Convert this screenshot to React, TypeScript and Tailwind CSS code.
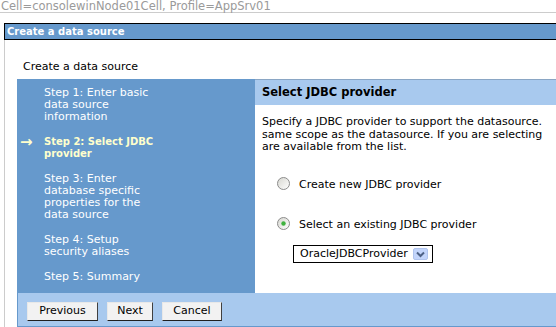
import React from 'react';

const steps = [
    { lines: ['Step 1: Enter basic', 'data source', 'information'] },
    { lines: ['Step 2: Select JDBC', 'provider'], current: true },
    { lines: ['Step 3: Enter', 'database specific', 'properties for the', 'data source'] },
    { lines: ['Step 4: Setup', 'security aliases'] },
    { lines: ['Step 5: Summary'] },
];

function Radio({ checked }: { checked?: boolean }) {
    const id = checked ? 'rg1' : 'rg0';
    return (
        <svg width="13" height="13" viewBox="0 0 13 13" className="shrink-0">
            <defs>
                <linearGradient id={id} x1="0" y1="0" x2="1" y2="1">
                    <stop offset="0" stopColor="#d6d6d0" />
                    <stop offset="1" stopColor="#ffffff" />
                </linearGradient>
            </defs>
            <circle cx="6.5" cy="6.5" r="6" fill={`url(#${id})`} stroke="#8c8c8c" />
            {checked && <circle cx="6.5" cy="6.5" r="2.2" fill="#3fb23f" />}
        </svg>
    );
}

function Btn({ label, w }: { label: string; w: string }) {
    return (
        <button
            className={`${w} h-[19px] bg-[#f2f2f2] border border-t-[#e8e8e8] border-l-[#e8e8e8] border-r-[#404040] border-b-[#202020] text-[11px] leading-[16px] text-black text-center`}
        >
            {label}
        </button>
    );
}

export default function App() {
    return (
        <div className="w-[556px] h-[327px] overflow-hidden bg-white font-['DejaVu_Sans',Verdana,sans-serif] text-[11px] text-black">
            {/* scope line */}
            <div className="h-[13px] border-b border-[#cccccc] pl-px text-[11.5px] leading-[12px] text-[#9a9a9a] whitespace-nowrap">
                Cell=consolewinNode01Cell, Profile=AppSrv01
            </div>

            <div className="mt-[10px] ml-[4px]">
                {/* page title bar */}
                <div className="h-[17px] border-y border-l border-black bg-[#6699cc] pl-[2px] text-[10px] text-white font-bold leading-[15px] whitespace-nowrap">
                    Create a data source
                </div>

                <div className="border-l border-[#cccccc] pl-[12px] pt-[20px]">
                    <div className="pl-[6px] leading-[14px] whitespace-nowrap">Create a data source</div>

                    <div className="mt-[5px]">
                        <div className="flex">
                            {/* wizard steps */}
                            <div className="w-[238px] shrink-0 bg-[#6699cc] pt-[8px] pb-[10px] text-white leading-[12px] flex flex-col gap-[13px]">
                                {steps.map((s, i) => (
                                    <div key={i} className="flex">
                                        <div className="w-[27px] pl-[3px] shrink-0 text-[#ffffcc] text-[15px] leading-[12px] font-bold">
                                            {s.current ? '→' : ''}
                                        </div>
                                        <div className={s.current ? 'font-bold text-[10px] text-[#ffffcc]' : ''}>
                                            {s.lines.map((l) => (
                                                <div key={l} className="whitespace-nowrap">{l}</div>
                                            ))}
                                        </div>
                                    </div>
                                ))}
                            </div>

                            {/* step content */}
                            <div className="flex-1 min-w-0">
                                <div className="h-[26px] border-t border-[#8aa6c4] bg-[#a8c9ee] pl-[7px] flex items-center text-[11.5px] font-bold whitespace-nowrap">
                                    Select JDBC provider
                                </div>
                                <div className="pl-[7px] pt-[11px] leading-[12.5px] whitespace-nowrap">
                                    <div>Specify a JDBC provider to support the datasource.</div>
                                    <div>same scope as the datasource. If you are selecting</div>
                                    <div>are available from the list.</div>
                                </div>
                                <div className="pl-[22px] leading-[12px]">
                                    <div className="mt-[23px] h-[13px] flex items-start gap-[9px] whitespace-nowrap">
                                        <Radio />
                                        <span className="mt-[2px]">Create new JDBC provider</span>
                                    </div>
                                    <div className="mt-[27px] h-[13px] flex items-start gap-[9px] whitespace-nowrap">
                                        <Radio checked />
                                        <span className="mt-[2px]">Select an existing JDBC provider</span>
                                    </div>
                                    <div className="mt-[15px] ml-[16px] w-[140px] h-[18px] border border-black flex items-center pl-[6px] pr-[4px] whitespace-nowrap">
                                        <span className="flex-1">OracleJDBCProvider</span>
                                        <svg width="15" height="12" viewBox="0 0 15 12">
                                            <rect x="0.5" y="0.5" width="14" height="11" rx="1.5" fill="#c3d5fb" stroke="#b0c4ee" />
                                            <path d="M4 4.5 L7.5 8 L11 4.5" fill="none" stroke="#4d6185" strokeWidth="2" />
                                        </svg>
                                    </div>
                                </div>
                            </div>
                        </div>

                        {/* buttons */}
                        <div className="h-[34px] bg-[#a8c9ee] border-l border-b border-[#6699cc] pl-[9px] flex items-center gap-[9px] pt-[3px]">
                            <Btn label="Previous" w="w-[71px]" />
                            <Btn label="Next" w="w-[46px]" />
                            <Btn label="Cancel" w="w-[60px]" />
                        </div>
                    </div>
                </div>
            </div>
        </div>
    );
}
